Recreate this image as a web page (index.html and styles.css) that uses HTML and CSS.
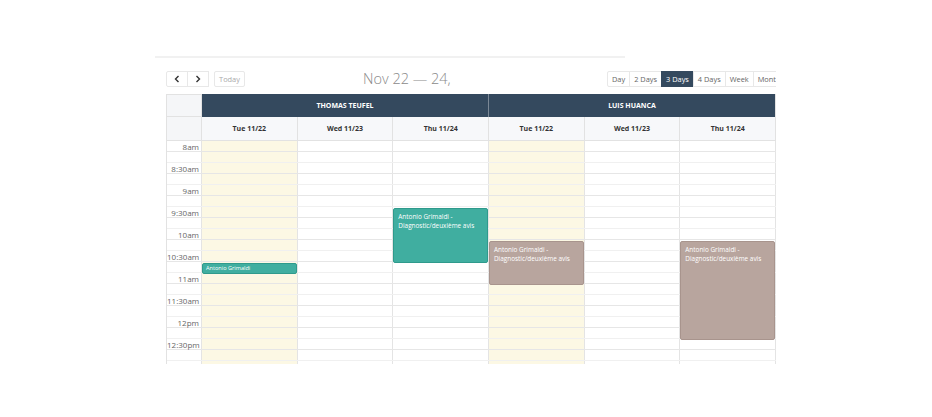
FILE: index.html
```html
<!DOCTYPE html>
<html lang="en">
<head>
<meta charset="UTF-8">
<title>Agenda</title>
<link rel="stylesheet" href="styles.css">
</head>
<body>

<div class="page">
  <div class="rule"></div>

  <div class="cal">
    <div class="toolbar">
      <div class="left">
        <div class="btn-group">
          <button class="btn nav-btn"><svg width="6" height="8" viewBox="0 0 6 8"><path d="M4.5 1 L1.5 4 L4.5 7" fill="none" stroke="#333" stroke-width="1.4"/></svg></button>
          <button class="btn nav-btn"><svg width="6" height="8" viewBox="0 0 6 8"><path d="M1.5 1 L4.5 4 L1.5 7" fill="none" stroke="#333" stroke-width="1.4"/></svg></button>
        </div>
        <button class="btn today">Today</button>
      </div>
      <h2 class="title">Nov 22 — 24,</h2>
      <div class="btn-group views">
        <button class="btn">Day</button>
        <button class="btn">2 Days</button>
        <button class="btn active">3 Days</button>
        <button class="btn">4 Days</button>
        <button class="btn">Week</button>
        <button class="btn">Month</button>
      </div>
    </div>

    <div class="table">
      <div class="head">
        <div class="corner"></div>
        <div class="resource">THOMAS TEUFEL</div>
        <div class="resource">LUIS HUANCA</div>
        <div class="corner"></div>
        <div class="day">Tue 11/22</div>
        <div class="day">Wed 11/23</div>
        <div class="day">Thu 11/24</div>
        <div class="day">Tue 11/22</div>
        <div class="day">Wed 11/23</div>
        <div class="day">Thu 11/24</div>
      </div>

      <div class="body">
        <div class="cols">
          <div class="col"></div>
          <div class="col today-col">
            <div class="event teal small" style="top:122px;height:11px">Antonio Grimaldi</div>
          </div>
          <div class="col"></div>
          <div class="col">
            <div class="event teal" style="top:67px;height:55px">Antonio Grimaldi -<br>Diagnostic/deuxième avis</div>
          </div>
          <div class="col today-col">
            <div class="event brown" style="top:100px;height:44px">Antonio Grimaldi -<br>Diagnostic/deuxième avis</div>
          </div>
          <div class="col"></div>
          <div class="col">
            <div class="event brown" style="top:100px;height:99px">Antonio Grimaldi -<br>Diagnostic/deuxième avis</div>
          </div>
        </div>
        <div class="lines" id="lines"></div>
      </div>
    </div>
  </div>
</div>

<script>
  // 15 minute slots, a label every half hour
  var labels = ['8am', '8:30am', '9am', '9:30am', '10am', '10:30am', '11am', '11:30am', '12pm', '12:30pm'];
  var lines = document.getElementById('lines');
  for (var i = 0; i < 21; i++) {
    var row = document.createElement('div');
    row.className = 'slot' + (i % 2 ? ' minor' : '');
    var label = document.createElement('span');
    label.className = 'time';
    label.textContent = (i % 2 || i >= 20) ? '' : labels[i / 2];
    row.appendChild(label);
    lines.appendChild(row);
  }
</script>

</body>
</html>
```

FILE: styles.css
```css
body {
  margin: 0;
  background-color: #fff;
  font-family: 'Open Sans', 'DejaVu Sans', sans-serif;
  color: #333;
}
.page {
  padding: 56px 0 0 155px;
}
.rule {
  width: 470px;
  height: 2px;
  background-color: #f1f1f1;
}
.cal {
  width: 610px;
  margin: 11px 0 0 11px;
  overflow: hidden;
}

/* toolbar */
.toolbar {
  display: grid;
  grid-template-columns: 197px 244px auto;
  align-items: center;
  height: 17px;
}
.left {
  display: flex;
  gap: 6px;
}
.btn-group {
  display: flex;
}
.btn {
  height: 16px;
  padding: 0 4px;
  border: 1px solid #e8e8e8;
  margin-left: -1px;
  background-color: #fff;
  color: #666;
  font-family: inherit;
  font-size: 7.4px;
  line-height: 14px;
  white-space: nowrap;
  cursor: pointer;
}
.btn-group .btn:first-child {
  margin-left: 0;
  border-radius: 2px 0 0 2px;
}
.nav-btn {
  width: 22px;
  display: flex;
  align-items: center;
  justify-content: center;
}
.btn.today {
  width: 31px;
  border-radius: 2px;
  color: #aaa;
}
.btn.active {
  background-color: #34495e;
  border-color: #34495e;
  color: #fff;
}
.title {
  margin: 0;
  font-size: 14.5px;
  font-weight: 300;
  color: #8a8a8a;
  white-space: nowrap;
}
.views .btn {
  flex-shrink: 0;
}

/* grid */
.table {
  margin-top: 8px;
  border-left: 1px solid #e2e2e2;
}
.head {
  display: grid;
  grid-template-columns: 35px repeat(6, 1fr);
  grid-template-rows: 23px 24px;
}
.corner {
  background-color: #f5f6f8;
  border-right: 1px solid #e2e2e2;
  border-bottom: 1px solid #e2e2e2;
}
.corner:first-child {
  border-top: 1px solid #e2e2e2;
}
.resource {
  grid-column: span 3;
  background-color: #34495e;
  border-right: 1px solid #7b8896;
  color: #fff;
  font-size: 7px;
  font-weight: 700;
  display: flex;
  align-items: center;
  justify-content: center;
}
.resource:nth-child(3) {
  border-right: 1px solid #e2e2e2;
}
.day {
  background-color: #f7f8fa;
  border-right: 1px solid #e2e2e2;
  border-bottom: 1px solid #e2e2e2;
  font-size: 7px;
  font-weight: 700;
  color: #333;
  display: flex;
  align-items: center;
  justify-content: center;
}

.body {
  display: grid;
  height: 223px;
  overflow: hidden;
}
.cols,
.lines {
  grid-area: 1 / 1;
}
.cols {
  display: grid;
  grid-template-columns: 35px repeat(6, 1fr);
}
.col {
  position: relative;
  border-right: 1px solid #e4e4e4;
}
.today-col {
  background-color: #fcf8e4;
}
.lines {
  position: relative;
  z-index: 1;
}
.slot {
  height: 11px;
  box-sizing: border-box;
  border-bottom: 1px solid #e6e6e6;
}
.slot.minor {
  border-bottom-color: #f0f0f0;
}
.time {
  display: block;
  width: 32px;
  text-align: right;
  font-size: 8px;
  line-height: 11px;
  color: #666;
}

/* events */
.event {
  position: absolute;
  left: 0;
  right: 0;
  z-index: 2;
  box-sizing: border-box;
  padding: 3px 4px;
  border-radius: 2px;
  color: #fff;
  font-size: 6.4px;
  line-height: 9px;
  overflow: hidden;
}
.event.teal {
  background-color: #40aea0;
  border: 1px solid #2f9a8c;
}
.event.brown {
  background-color: #b8a59e;
  border: 1px solid #a8948d;
}
.event.small {
  padding: 0 3px;
  font-size: 5.6px;
  line-height: 9px;
}
```
